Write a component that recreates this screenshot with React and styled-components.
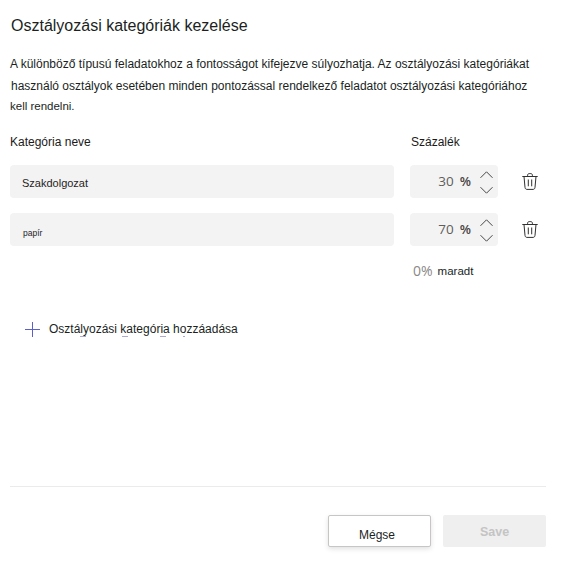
import React from "react"
import styled, { createGlobalStyle } from "styled-components"

const Global = createGlobalStyle`
  html, body { margin: 0; padding: 0; background: #fff; }
  body { font-family: "Liberation Sans", Arial, sans-serif; color: #1b1a19; }
  * { box-sizing: border-box; }
`

const Page = styled.div`
  width: 570px;
  height: 564px;
  padding: 0 24px 17px 10px;
  display: flex;
  flex-direction: column;
  overflow: hidden;
`

const Title = styled.h1`
  margin: 16px 0 0 1px;
  font-size: 16px;
  line-height: 20px;
  font-weight: 400;
  color: #201f1e;
`

const Description = styled.div`
  margin-top: 17px;
  color: #201f1e;
`

const DescLine = styled.div`
  height: ${p => p.$h}px;
  line-height: ${p => p.$h}px;
  font-size: ${p => p.$size}px;
  padding-left: ${p => p.$indent || 0}px;
  white-space: nowrap;
`

const Grid = styled.div`
  display: grid;
  grid-template-columns: 384px 88px 48px;
  column-gap: 16px;
  align-items: center;
`

const HeadRow = styled(Grid)`
  margin-top: 20px;
  margin-bottom: 16px;
  font-size: 12px;
  line-height: 14px;
`

const PercentHead = styled.span`
  padding-left: 1px;
`

const Row = styled(Grid)`
  margin-bottom: 15px;
`

const Field = styled.div`
  height: 33px;
  background: #f3f3f3;
  border-radius: 4px;
  display: flex;
  align-items: center;
`

const NameField = styled(Field)`
  padding: ${p => (p.$small ? "6px 0 0 13px" : "3px 0 0 12px")};
  font-size: ${p => (p.$small ? "8.5px" : "11px")};
  color: #252423;
`

const PercentField = styled(Field)`
  justify-content: flex-end;
  padding-right: 5px;
  gap: 9px;
`

const PercentText = styled.span`
  padding-bottom: 2px;
`

const Value = styled.span`
  font-family: "Open Sans", sans-serif;
  font-size: 13.5px;
  color: #605e5c;
`

const Sign = styled.b`
  font-family: "Open Sans", sans-serif;
  font-size: 13px;
  font-weight: 600;
  color: #484644;
  margin-left: 6px;
`

const Steppers = styled.div`
  display: flex;
  flex-direction: column;
  gap: 9px;
  padding-top: 2px;
`

const IconSlot = styled.div`
  display: flex;
  padding-left: 8px;
`

const Remaining = styled.div`
  margin-left: 403px;
  margin-top: 1px;
  height: 18px;
  display: flex;
  align-items: center;
  gap: 5px;
`

const RemainingValue = styled.span`
  font-family: "Open Sans", sans-serif;
  font-size: 14px;
  color: #8a8886;
  margin-bottom: 2px;
`

const RemainingLabel = styled.span`
  font-size: 11.5px;
  color: #201f1e;
`

const AddRow = styled.div`
  margin: 41px 0 0 15px;
  display: flex;
  align-items: center;
  gap: 9px;
  font-size: 12px;
  line-height: 16px;
  color: #201f1e;
`

const AddLabel = styled.span`
  position: relative;
`

const Squiggles = styled.svg`
  position: absolute;
  left: 0;
  top: 14px;
`

const Footer = styled.div`
  margin-top: auto;
  border-top: 1px solid #edebe9;
  padding-top: 28px;
  display: flex;
  justify-content: flex-end;
  gap: 12px;
`

const Button = styled.button`
  width: 103px;
  height: 32px;
  border-radius: 2px;
  font-family: "Liberation Sans", Arial, sans-serif;
  padding: 0;
`

const CancelButton = styled(Button)`
  background: #fff;
  border: 1px solid #c8c6c4;
  color: #201f1e;
  font-size: 12px;
  padding: 7px 5px 0 0;
  box-shadow: 0 2px 5px rgba(0, 0, 0, 0.12);
`

const SaveButton = styled(Button)`
  background: #efefef;
  border: 0;
  color: #c4c4c4;
  font-weight: 700;
  font-size: 12.5px;
  padding-top: 1px;
`

const Chevron = ({ up }) => (
  <svg width="13" height="7" viewBox="0 0 13 7" fill="none" stroke="#484644" strokeWidth="1">
    <path d={up ? "M.5 6.8 6.5 .8 12.5 6.8" : "M.5 .2 6.5 6.2 12.5 .2"} />
  </svg>
)

const Trash = () => (
  <svg width="16" height="17" viewBox="0 0 16 17" fill="none" stroke="#323130" strokeWidth="1">
    <path d="M.3 3.5h15.4M5.6 3.5V2.2C5.6 1.2 6.3.6 7.2.6h1.6c.9 0 1.6.6 1.6 1.6v1.3" />
    <path d="M2 3.5 3 14.4c.1 1.2.9 2 2 2h6c1.1 0 1.9-.8 2-2l1-10.9" />
    <path d="M6.3 6.5v6.8M9.7 6.5v6.8" />
  </svg>
)

const Plus = () => (
  <svg width="15" height="15" viewBox="0 0 15 15" stroke="#5b5fc7" strokeWidth="1">
    <path d="M7.5 0v15M0 7.5h15" />
  </svg>
)

const categories = [
  { id: 1, name: "Szakdolgozat", percent: 30 },
  { id: 2, name: "papír", percent: 70, small: true },
]

export default function App() {
  return (
    <Page>
      <Global />
      <Title>Osztályozási kategóriák kezelése</Title>
      <Description>
        <DescLine $h={22} $size={12}>A különböző típusú feladatokhoz a fontosságot kifejezve súlyozhatja. Az osztályozási kategóriákat</DescLine>
        <DescLine $h={22} $size={12} $indent={1}>használó osztályok esetében minden pontozással rendelkező feladatot osztályozási kategóriához</DescLine>
        <DescLine $h={18} $size={11.5}>kell rendelni.</DescLine>
      </Description>
      <HeadRow>
        <span>Kategória neve</span>
        <PercentHead>Százalék</PercentHead>
      </HeadRow>
      {categories.map(c => (
        <Row key={c.id}>
          <NameField $small={c.small}>{c.name}</NameField>
          <PercentField>
            <PercentText>
              <Value>{c.percent}</Value>
              <Sign>%</Sign>
            </PercentText>
            <Steppers>
              <Chevron up />
              <Chevron />
            </Steppers>
          </PercentField>
          <IconSlot>
            <Trash />
          </IconSlot>
        </Row>
      ))}
      <Remaining>
        <RemainingValue>0%</RemainingValue>
        <RemainingLabel>maradt</RemainingLabel>
      </Remaining>
      <AddRow>
        <Plus />
        <AddLabel>
          Osztályozási kategória hozzáadása
          <Squiggles width="190" height="3" viewBox="0 0 190 3" fill="none" stroke="#6264a7" strokeOpacity=".55">
            <path d="M31 1.5h6M73 1.5h6M111 1.5h6M134 1.5h2" />
          </Squiggles>
        </AddLabel>
      </AddRow>
      <Footer>
        <CancelButton>Mégse</CancelButton>
        <SaveButton>Save</SaveButton>
      </Footer>
    </Page>
  )
}
